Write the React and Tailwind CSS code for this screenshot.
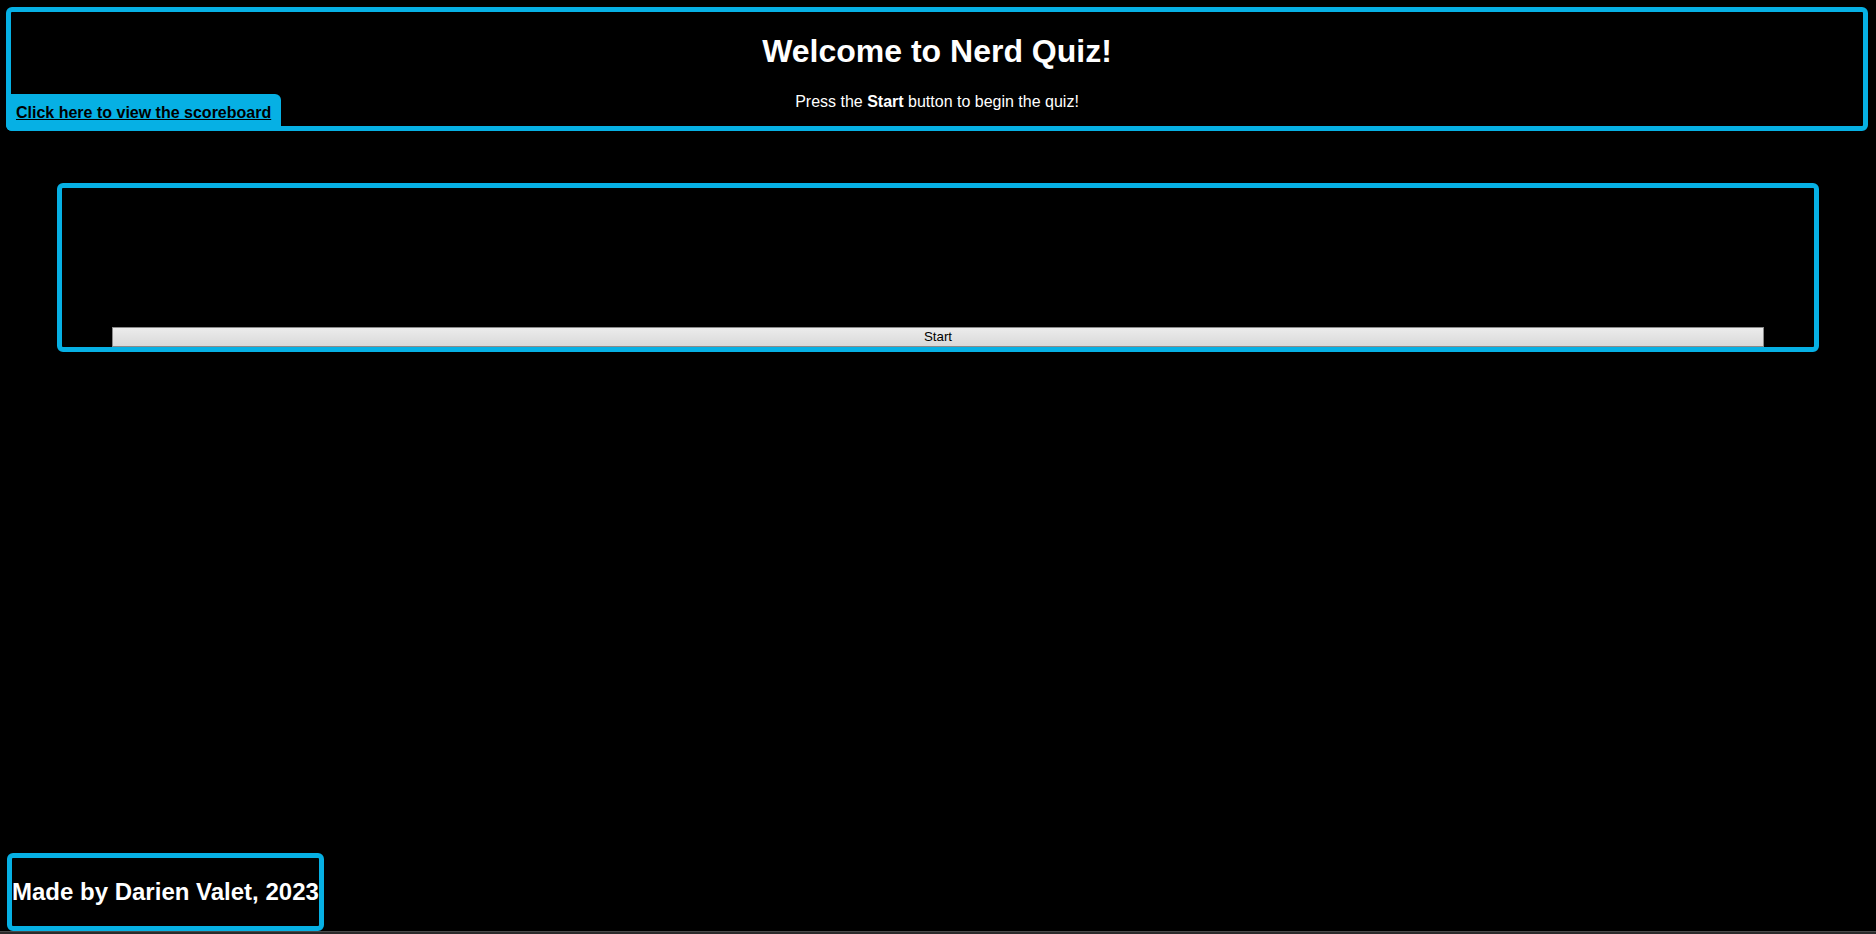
export default function App() {
  return (
    <div className="flex h-[934px] w-full flex-col overflow-hidden bg-black font-['Liberation_Sans',Arial,sans-serif] text-white">
      <header className="relative mt-[7px] ml-[6px] mr-[8px] h-[124px] rounded-[6px] border-[5px] border-[#06b0e4] text-center">
        <h1 className="mt-[21px] text-[32px] font-bold leading-[37px]">Welcome to Nerd Quiz!</h1>
        <p className="mt-[23px] text-[16px] leading-[18px]">
          Press the <b>Start</b> button to begin the quiz!
        </p>
        <a
          href="#"
          className="absolute bottom-[-5px] left-[-5px] flex h-[37px] w-[275px] items-center rounded-tr-[6px] rounded-bl-[6px] bg-[#06b0e4] pl-[10px] text-[16px] font-bold leading-[18px] text-black underline"
        >
          Click here to view the scoreboard
        </a>
      </header>

      <main className="mt-[52px] ml-[57px] mr-[57px] flex h-[169px] flex-col justify-end rounded-[6px] border-[5px] border-[#06b0e4]">
        <button className="mx-[50px] h-[20px] border border-[#8a8a8a] bg-gradient-to-b from-[#ececec] to-[#d9d9d9] text-[13.33px] leading-[16px] text-black">
          Start
        </button>
      </main>

      <footer className="mt-auto ml-[7px] w-fit rounded-[6px] border-[5px] border-[#06b0e4]">
        <h2 className="my-[20px] whitespace-nowrap text-[24px] font-bold leading-[28px]">Made by Darien Valet, 2023</h2>
      </footer>
      <div className="h-[3px] w-full border-t border-[#4a4a4a] bg-[#2b2b2b]" />
    </div>
  );
}
